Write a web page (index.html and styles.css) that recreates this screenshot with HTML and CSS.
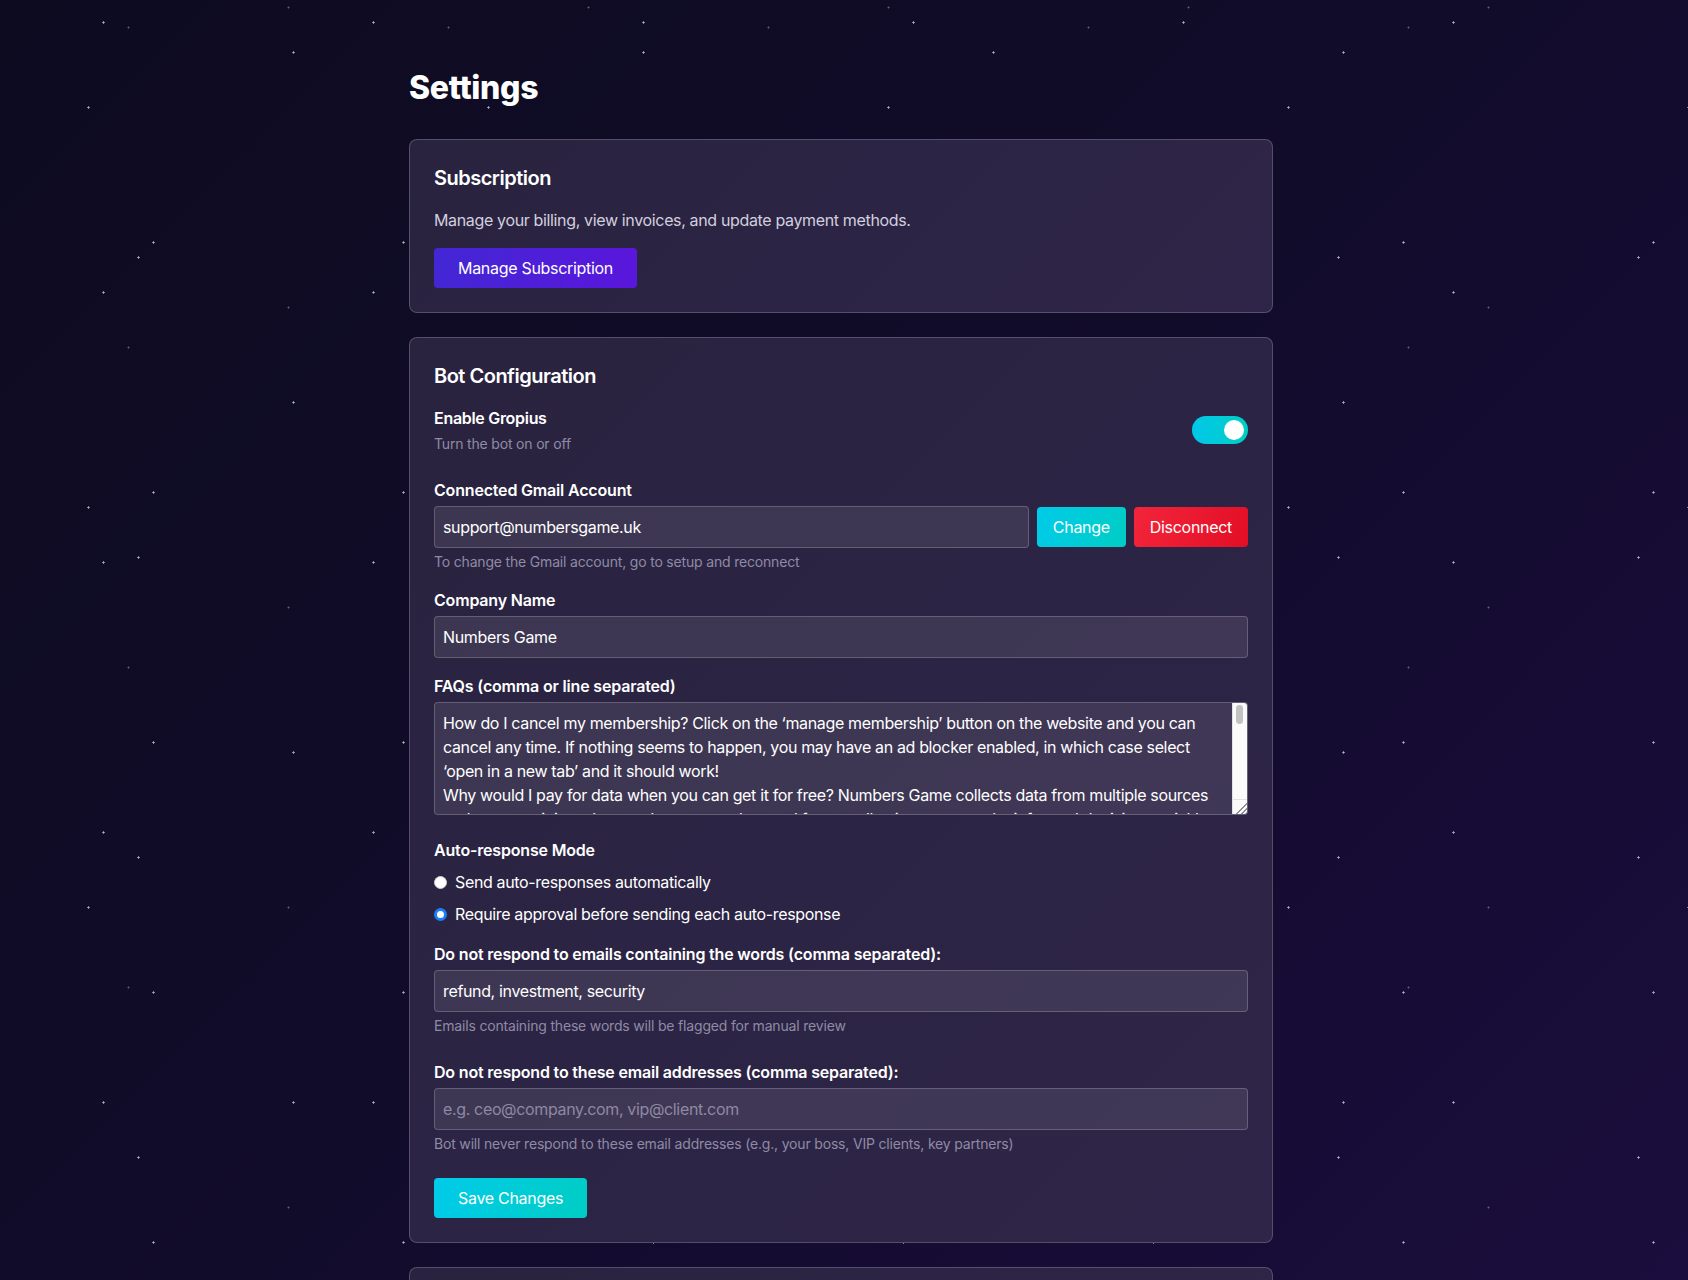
FILE: index.html
```html
<!DOCTYPE html>
<html lang="en">
<head>
<meta charset="utf-8">
<title>Settings</title>
<link rel="stylesheet" href="styles.css">
</head>
<body>
<div class="page">
  <h1 class="title">Settings</h1>

  <section class="card">
    <h2 class="card-title">Subscription</h2>
    <p class="card-desc">Manage your billing, view invoices, and update payment methods.</p>
    <button class="btn btn-purple">Manage Subscription</button>
  </section>

  <section class="card">
    <h2 class="card-title">Bot Configuration</h2>

    <div class="toggle-row">
      <div class="toggle-text">
        <div class="toggle-label">Enable Gropius</div>
        <p class="hint">Turn the bot on or off</p>
      </div>
      <span class="toggle is-on"><span class="knob"></span></span>
    </div>

    <div class="field field-gap16">
      <label class="label">Connected Gmail Account</label>
      <div class="input-row">
        <input class="input" type="text" value="support@numbersgame.uk" readonly>
        <button class="btn btn-cyan">Change</button>
        <button class="btn btn-red">Disconnect</button>
      </div>
      <p class="hint">To change the Gmail account, go to setup and reconnect</p>
    </div>

    <div class="field field-gap16">
      <label class="label">Company Name</label>
      <input class="input" type="text" value="Numbers Game">
    </div>

    <div class="field field-gap23">
      <label class="label">FAQs (comma or line separated)</label>
      <div class="textarea-wrap">
        <textarea class="textarea">How do I cancel my membership? Click on the ‘manage membership’ button on the website and you can cancel any time. If nothing seems to happen, you may have an ad blocker enabled, in which case select ‘open in a new tab’ and it should work!
Why would I pay for data when you can get it for free? Numbers Game collects data from multiple sources and presents it in a clean and easy to understand format, allowing you to make informed decisions quickly without having to hunt for the numbers yourself.
How often is the data updated? Our data is refreshed every day, and key figures are updated as soon as new information becomes available from our sources.
Can I share my account? Each membership is for a single user. If you need access for a team, please get in touch and we can set up a team plan for you.
Do you offer refunds? We do not offer refunds on memberships that have already been used, but you can cancel at any time to stop future payments.</textarea>
        <div class="fake-scrollbar" aria-hidden="true">
          <div class="fake-thumb"></div>
          <div class="fake-grip"></div>
        </div>
      </div>
    </div>

    <div class="field field-gap16">
      <span class="label label-radio">Auto-response Mode</span>
      <div class="radios">
        <label class="radio-row"><input class="radio" type="radio" name="mode"> Send auto-responses automatically</label>
        <label class="radio-row"><input class="radio" type="radio" name="mode" checked> Require approval before sending each auto-response</label>
      </div>
    </div>

    <div class="field field-gap24">
      <label class="label">Do not respond to emails containing the words (comma separated):</label>
      <input class="input" type="text" value="refund, investment, security">
      <p class="hint">Emails containing these words will be flagged for manual review</p>
    </div>

    <div class="field field-gap24">
      <label class="label">Do not respond to these email addresses (comma separated):</label>
      <input class="input" type="text" placeholder="e.g. ceo@company.com, vip@client.com">
      <p class="hint">Bot will never respond to these email addresses (e.g., your boss, VIP clients, key partners)</p>
    </div>

    <button class="btn btn-cyan">Save Changes</button>
  </section>

  <section class="card card-empty"></section>
</div>
</body>
</html>
```

FILE: styles.css
```css
* { box-sizing: border-box; }

html, body { margin: 0; padding: 0; }

body {
  min-height: 100vh;
  padding-right: 6px;
  font-family: Inter, "Noto Sans", "Liberation Sans", sans-serif;
  color: #ffffff;
  background-color: #110c2a;
  background-image:
    radial-gradient(circle at 103.5px 22.5px, rgba(200,198,220,0.85) 0.9px, transparent 1.3px),
    radial-gradient(circle at 293.5px 52.5px, rgba(200,198,220,0.85) 0.9px, transparent 1.3px),
    radial-gradient(circle at 288.5px 7.5px, rgba(150,148,175,0.6) 0.8px, transparent 1.2px),
    radial-gradient(circle at 138.5px 257.5px, rgba(200,198,220,0.85) 0.9px, transparent 1.3px),
    radial-gradient(circle at 128.5px 27.5px, rgba(150,148,175,0.6) 0.8px, transparent 1.2px),
    radial-gradient(circle at 88.5px 107.5px, rgba(200,198,220,0.85) 0.9px, transparent 1.3px),
    radial-gradient(circle at 153.5px 242.5px, rgba(200,198,220,0.85) 0.9px, transparent 1.3px),
    linear-gradient(135deg, #0d0b20 0%, #110c29 45%, #160c34 75%, #1b0d3d 100%);
  background-size:
    270px 270px, 350px 350px, 300px 300px, 300px 300px, 320px 320px, 400px 400px, 250px 250px, 100% 100%;
  background-attachment: fixed;
}

.page {
  width: 864px;
  margin: 0 auto;
  padding: 68px 0 40px;
}

.title {
  margin: 0 0 31px;
  font-size: 32px;
  line-height: 40px;
  font-weight: 800;
  letter-spacing: -0.3px;
  color: #ffffff;
}

.card {
  border: 1px solid rgba(255, 255, 255, 0.2);
  border-radius: 8px;
  padding: 24px;
  margin-bottom: 24px;
  background: linear-gradient(135deg, #29233f 0%, #2b2444 50%, #2f2548 100%);
}

.card-empty { height: 160px; }

.card-title {
  margin: 0 0 16px;
  font-size: 20px;
  line-height: 28px;
  font-weight: 600;
  letter-spacing: -0.5px;
  color: #ffffff;
}

.card-desc {
  margin: 0 0 16px;
  font-size: 16px;
  line-height: 24px;
  letter-spacing: -0.35px;
  color: #d2cfdf;
}

.btn {
  display: inline-flex;
  align-items: center;
  justify-content: center;
  align-self: flex-start;
  height: 40px;
  padding: 0 24px;
  border: 0;
  border-radius: 4px;
  font-family: inherit;
  font-size: 16px;
  font-weight: 400;
  line-height: 24px;
  letter-spacing: -0.3px;
  color: #ffffff;
  cursor: pointer;
  white-space: nowrap;
}

.btn-purple { background: linear-gradient(100deg, #4227d4 0%, #5a16dc 100%); }
.btn-cyan { background: linear-gradient(110deg, #00cbea 0%, #00cdc4 100%); }
.btn-red { background: linear-gradient(110deg, #f3253a 0%, #e20e25 100%); }

.input-row .btn { padding: 0 16px; align-self: center; }

.toggle-row {
  display: flex;
  align-items: center;
  justify-content: space-between;
  margin-bottom: 24px;
}

.toggle-label {
  font-size: 16px;
  line-height: 24px;
  font-weight: 600;
  letter-spacing: -0.3px;
}

.toggle {
  display: flex;
  align-items: center;
  justify-content: flex-end;
  width: 56px;
  height: 28px;
  padding: 4px;
  border-radius: 14px;
  background: linear-gradient(90deg, #00c7ea 0%, #00cfc4 100%);
}

.knob {
  width: 20px;
  height: 20px;
  border-radius: 50%;
  background: #ffffff;
}

.hint {
  margin: 4px 0 0;
  font-size: 14px;
  line-height: 20px;
  letter-spacing: -0.18px;
  color: #8f8ba4;
}

.field { display: flex; flex-direction: column; }
.field-gap16 { margin-bottom: 16px; }
.field-gap23 { margin-bottom: 23px; }
.field-gap24 { margin-bottom: 24px; }

.label {
  display: block;
  margin-bottom: 4px;
  font-size: 16px;
  line-height: 24px;
  font-weight: 600;
  letter-spacing: -0.18px;
  color: #ffffff;
}

.label-radio { margin-bottom: 8px; }

.input-row {
  display: flex;
  align-items: center;
  gap: 8px;
}

.input-row .input { flex: 1; }

.input, .textarea {
  width: 100%;
  height: 42px;
  padding: 8px;
  border: 1px solid rgba(255, 255, 255, 0.2);
  border-radius: 4px;
  background: rgba(255, 255, 255, 0.09);
  font-family: inherit;
  font-size: 16px;
  line-height: 24px;
  letter-spacing: -0.35px;
  color: #ffffff;
  outline: none;
}

.input::placeholder { color: #8d89a1; }

.textarea-wrap { position: relative; }

.textarea {
  display: block;
  height: 113px;
  padding-right: 23px;
  resize: none;
  overflow: hidden;
}

.fake-scrollbar {
  position: absolute;
  top: 1px;
  right: 1px;
  bottom: 1px;
  width: 15px;
  display: flex;
  flex-direction: column;
  justify-content: space-between;
  background: #fafafa;
  border-left: 1px solid #e2e2e2;
  border-radius: 0 3px 3px 0;
}

.fake-thumb {
  width: 7px;
  height: 19px;
  margin: 2px 0 0 3px;
  border-radius: 4px;
  background: #c2c2c2;
}

.fake-grip {
  height: 15px;
  border-top: 1px solid #e2e2e2;
  background: linear-gradient(135deg, transparent 60%, #8f8f8f 60%, #8f8f8f 66%, transparent 66%, transparent 78%, #8f8f8f 78%, #8f8f8f 84%, transparent 84%);
}

.radios {
  display: flex;
  flex-direction: column;
  gap: 8px;
}

.radio-row {
  display: flex;
  align-items: center;
  height: 24px;
  font-size: 16px;
  line-height: 24px;
  letter-spacing: -0.35px;
  color: #ffffff;
}

.radio {
  appearance: none;
  -webkit-appearance: none;
  width: 13px;
  height: 13px;
  margin: 0 8px 0 0;
  border-radius: 50%;
  border: 1px solid #d0d0d0;
  background: #ffffff;
  flex: none;
}

.radio:checked {
  border: 3.5px solid #1a7ef6;
  background: #ffffff;
}
```
